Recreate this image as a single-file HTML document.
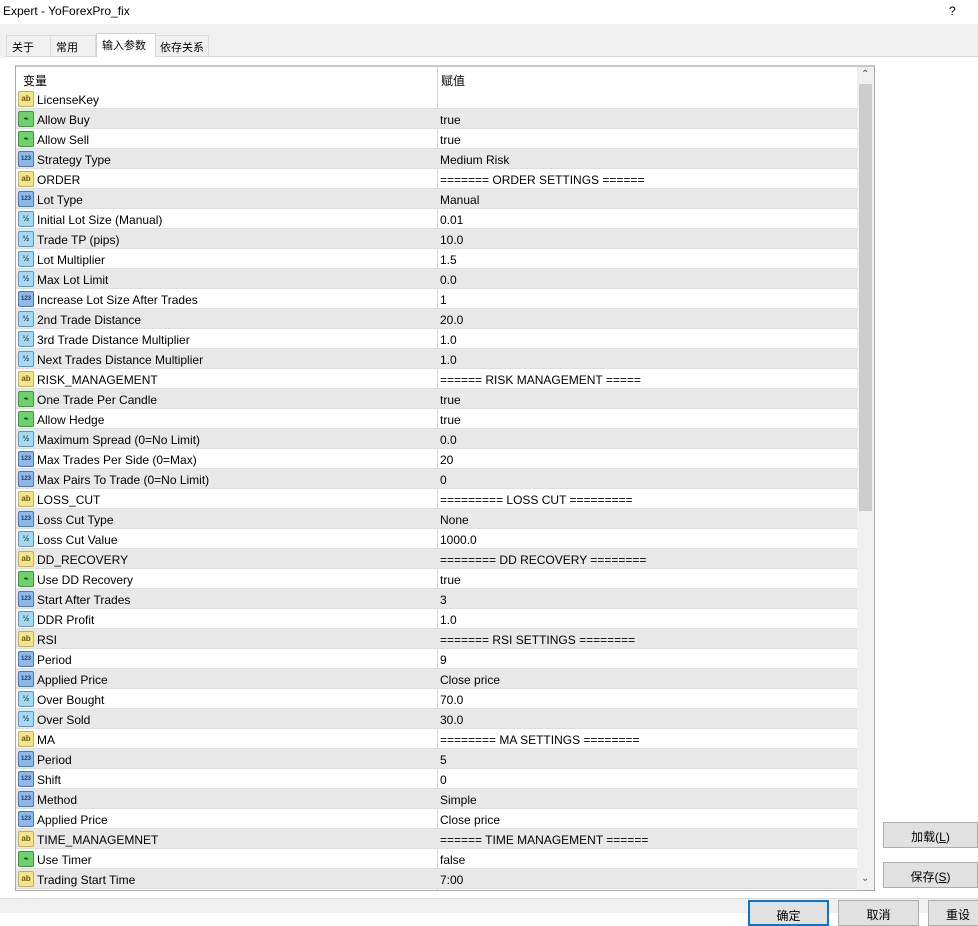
<!DOCTYPE html>
<html><head><meta charset="utf-8"><style>
*{margin:0;padding:0;box-sizing:border-box}
body{width:978px;height:913px;overflow:hidden;background:#fff;font-family:"Liberation Sans","Noto Sans CJK SC",sans-serif;font-size:12px;color:#000;position:relative}
.title{position:absolute;left:3px;top:4px;font-size:12px}
.q{position:absolute;left:949px;top:4px}
.tabbar{position:absolute;left:0;top:24px;width:978px;height:34px;background:#f0f0f0}
.tab{position:absolute;top:35px;height:21px;border:1px solid #d9d9d9;border-bottom:none;background:#f0f0f0;padding:3px 0 0 5px;white-space:nowrap;font-size:11px}
.tab.a{top:33px;height:24px;background:#fff;border-color:#d0d0d0}
.panel{position:absolute;left:5px;top:56px;width:973px;height:843px;background:#fff;border-top:1px solid #d9d9d9}
.bottom{position:absolute;left:0;top:898px;width:978px;height:15px;background:#f0f0f0;border-top:1px solid #dcdcdc}
.box{position:absolute;left:15px;top:65px;width:860px;height:826px;border:1px solid #a9a9a9;border-top:2px solid #c8c8c8;overflow:hidden;background:#fff}
.hdr{position:absolute;left:0;top:0;height:22px;width:842px}
.hdr span{position:absolute;top:5px}
.row{position:absolute;left:0;width:841px;height:20px;border-bottom:1px solid #dedede}
.row.g{background:#e8e8e8}
.row .n{position:absolute;left:21px;top:4px;white-space:nowrap}
.row .v{position:absolute;left:424px;top:4px;white-space:nowrap}
.div{position:absolute;left:421px;top:0;width:1px;height:826px;background:#d6d6d6}
.ic{position:absolute;left:2px;top:2px;width:16px;height:16px;border-radius:2px;font-size:8px;line-height:14px;text-align:center;font-weight:bold}
.s{background:#f4e48e;border:1px solid #c8b050;color:#6a5a10}
.b{background:#6fd06f;border:1px solid #3a9a3a;color:#104010}
.i{background:#8fb8e8;border:1px solid #4a7ab8;color:#1a3a6a;font-size:6px}
.d{background:#a8d8f0;border:1px solid #5a9ac0;color:#1a4a6a}
.sb{position:absolute;left:841px;top:0;width:17px;height:824px;background:#f0f0f0}
.thumb{position:absolute;left:2px;top:17px;width:13px;height:427px;background:#cdcdcd}
.btn{position:absolute;height:26px;background:#e1e1e1;border:1px solid #adadad;text-align:center;padding-top:5px}
</style></head><body>
<div class="title">Expert - YoForexPro_fix</div><div class="q">?</div>
<div class="tabbar"></div>
<div class="panel"></div>
<div class="tab" style="left:6px;width:45px">关于</div>
<div class="tab" style="left:50px;width:46px">常用</div>
<div class="tab a" style="left:96px;width:60px">输入参数</div>
<div class="tab" style="left:155px;width:54px;padding-left:4px">依存关系</div>
<div class="box">
<div class="hdr"><span style="left:7px">变量</span><span style="left:425px">赋值</span></div>
<div class="div"></div>
<div id="rows"></div>
<div class="sb"><div style="position:absolute;left:4px;top:2px;font-size:10px;color:#555">&#8963;</div><div class="thumb"></div><div style="position:absolute;left:4px;top:806px;font-size:10px;color:#555">&#8964;</div></div>
</div>
<div class="bottom"></div>
<div class="btn" style="left:883px;top:822px;width:95px">加载(<u>L</u>)</div>
<div class="btn" style="left:883px;top:862px;width:95px">保存(<u>S</u>)</div>
<div class="btn" style="left:748px;top:900px;width:81px;border:2px solid #0078d7">确定</div>
<div class="btn" style="left:838px;top:900px;width:81px">取消</div>
<div class="btn" style="left:928px;top:900px;width:60px">重设</div>
<script>
var R=[["s","LicenseKey",""],["b","Allow Buy","true"],["b","Allow Sell","true"],["i","Strategy Type","Medium Risk"],["s","ORDER","======= ORDER SETTINGS ======"],["i","Lot Type","Manual"],["d","Initial Lot Size (Manual)","0.01"],["d","Trade TP (pips)","10.0"],["d","Lot Multiplier","1.5"],["d","Max Lot Limit","0.0"],["i","Increase Lot Size After Trades","1"],["d","2nd Trade Distance","20.0"],["d","3rd Trade Distance Multiplier","1.0"],["d","Next Trades Distance Multiplier","1.0"],["s","RISK_MANAGEMENT","====== RISK MANAGEMENT ====="],["b","One Trade Per Candle","true"],["b","Allow Hedge","true"],["d","Maximum Spread (0=No Limit)","0.0"],["i","Max Trades Per Side (0=Max)","20"],["i","Max Pairs To Trade (0=No Limit)","0"],["s","LOSS_CUT","========= LOSS CUT ========="],["i","Loss Cut Type","None"],["d","Loss Cut Value","1000.0"],["s","DD_RECOVERY","======== DD RECOVERY ========"],["b","Use DD Recovery","true"],["i","Start After Trades","3"],["d","DDR Profit","1.0"],["s","RSI","======= RSI SETTINGS ========"],["i","Period","9"],["i","Applied Price","Close price"],["d","Over Bought","70.0"],["d","Over Sold","30.0"],["s","MA","======== MA SETTINGS ========"],["i","Period","5"],["i","Shift","0"],["i","Method","Simple"],["i","Applied Price","Close price"],["s","TIME_MANAGEMNET","====== TIME MANAGEMENT ======"],["b","Use Timer","false"],["s","Trading Start Time","7:00"]];
var L={s:"ab",b:"⌁",i:"123",d:"½"},h="";
R.forEach(function(r,k){h+='<div class="row'+(k%2?' g':'')+'" style="top:'+(22+k*20)+'px"><div class="ic '+r[0]+'">'+L[r[0]]+'</div><span class="n">'+r[1]+'</span><span class="v">'+r[2]+'</span></div>'});
document.getElementById("rows").innerHTML=h;
</script>
</body></html>
